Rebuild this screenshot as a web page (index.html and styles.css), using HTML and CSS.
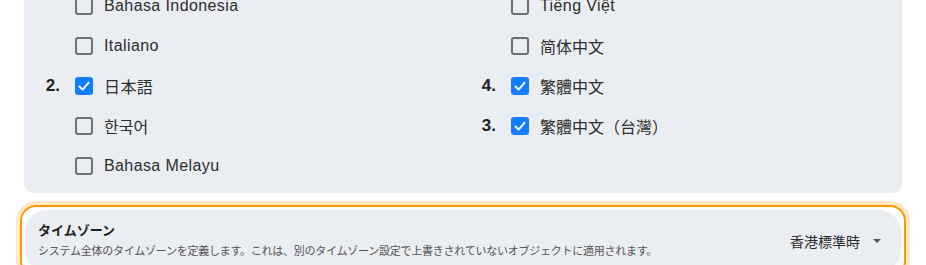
FILE: index.html
```html
<!DOCTYPE html>
<html lang="ja">
<head>
    <meta charset="UTF-8">
    <meta name="viewport" content="width=device-width, initial-scale=1.0">
    <title>言語とタイムゾーン</title>
    <link rel="stylesheet" href="styles.css">
</head>
<body>
    <div class="page">
        <div class="lang-panel">
            <div class="lang-col">
                <label class="lang-item">
                    <span class="order"></span>
                    <span class="box"></span>
                    <span class="name" lang="id">Bahasa Indonesia</span>
                </label>
                <label class="lang-item">
                    <span class="order"></span>
                    <span class="box"></span>
                    <span class="name" lang="it">Italiano</span>
                </label>
                <label class="lang-item">
                    <span class="order">2.</span>
                    <span class="box checked">
                        <svg viewBox="0 0 18 18" width="18" height="18"><polyline points="4.5,9.5 7.6,12.6 13.6,5.6"/></svg>
                    </span>
                    <span class="name">日本語</span>
                </label>
                <label class="lang-item">
                    <span class="order"></span>
                    <span class="box"></span>
                    <span class="name" lang="ko">한국어</span>
                </label>
                <label class="lang-item">
                    <span class="order"></span>
                    <span class="box"></span>
                    <span class="name" lang="ms">Bahasa Melayu</span>
                </label>
            </div>
            <div class="lang-col">
                <label class="lang-item">
                    <span class="order"></span>
                    <span class="box"></span>
                    <span class="name" lang="vi">Tiếng Việt</span>
                </label>
                <label class="lang-item">
                    <span class="order"></span>
                    <span class="box"></span>
                    <span class="name" lang="zh-CN">简体中文</span>
                </label>
                <label class="lang-item">
                    <span class="order">4.</span>
                    <span class="box checked">
                        <svg viewBox="0 0 18 18" width="18" height="18"><polyline points="4.5,9.5 7.6,12.6 13.6,5.6"/></svg>
                    </span>
                    <span class="name" lang="zh-TW">繁體中文</span>
                </label>
                <label class="lang-item">
                    <span class="order">3.</span>
                    <span class="box checked">
                        <svg viewBox="0 0 18 18" width="18" height="18"><polyline points="4.5,9.5 7.6,12.6 13.6,5.6"/></svg>
                    </span>
                    <span class="name" lang="zh-TW">繁體中文（台灣）</span>
                </label>
            </div>
        </div>

        <div class="setting-focus">
            <div class="setting">
                <div class="setting-text">
                    <div class="setting-title">タイムゾーン</div>
                    <div class="setting-desc">システム全体のタイムゾーンを定義します。これは、別のタイムゾーン設定で上書きされていないオブジェクトに適用されます。</div>
                </div>
                <div class="select">
                    <span>香港標準時</span>
                    <span class="caret"></span>
                </div>
            </div>
        </div>
    </div>
</body>
</html>
```

FILE: styles.css
```css
* {
    margin: 0;
    padding: 0;
    box-sizing: border-box;
}

body {
    background: #ffffff;
    font-family: "Liberation Sans", "Noto Sans CJK JP", sans-serif;
    color: #2b2b2b;
    overflow: hidden;
}

.page {
    padding: 0 24px;
}

.lang-panel {
    background: #eaedf1;
    border-radius: 0 0 9px 9px;
    margin-top: -14px;
    padding: 0 15px 7px;
    display: grid;
    grid-template-columns: 1fr 1fr;
    column-gap: 24px;
}

.lang-col {
    display: flex;
    flex-direction: column;
}

.lang-item {
    display: flex;
    align-items: center;
    height: 40px;
}

.order {
    width: 36px;
    padding-right: 15px;
    text-align: right;
    font-size: 17px;
    font-weight: 700;
    color: #222;
}

.box {
    width: 18px;
    height: 18px;
    border: 2px solid #6f6f6f;
    border-radius: 3px;
    flex-shrink: 0;
    display: flex;
}

.box.checked {
    border: none;
    background: #0f7fff;
}

.box svg polyline {
    fill: none;
    stroke: #ffffff;
    stroke-width: 1.9;
    stroke-linecap: round;
    stroke-linejoin: round;
}

.name {
    margin-left: 11px;
    font-size: 16px;
    letter-spacing: 0.4px;
    color: #2e2e2e;
}

.name:lang(zh-CN) {
    font-family: "Liberation Sans", "Noto Sans CJK SC", sans-serif;
    letter-spacing: 0;
}

.name:lang(zh-TW) {
    font-family: "Liberation Sans", "Noto Sans CJK TC", sans-serif;
    letter-spacing: 0;
}

.name:lang(ko) {
    font-family: "Liberation Sans", "Noto Sans CJK KR", sans-serif;
    letter-spacing: 0;
}

.setting-focus {
    margin: 12px -4px 0;
    border: 2px solid #ff9500;
    border-radius: 16px;
    box-shadow: 0 0 0 4px #ffe8c6;
    padding: 3px;
}

.setting {
    background: #eaedf1;
    border-radius: 22px;
    display: flex;
    align-items: center;
    justify-content: space-between;
    padding: 10px 20px 11px 13px;
    min-height: 62px;
}

.setting-title {
    font-size: 13px;
    font-weight: 700;
    color: #1e1e1e;
    line-height: 18px;
}

.setting-desc {
    font-size: 11px;
    letter-spacing: -0.25px;
    color: #555;
    line-height: 18px;
    margin-top: 2px;
}

.select {
    display: flex;
    align-items: center;
    gap: 13px;
    font-size: 14px;
    color: #2b2b2b;
}

.caret {
    width: 0;
    height: 0;
    border-left: 4px solid transparent;
    border-right: 4px solid transparent;
    border-top: 4px solid #555;
    margin-top: 1px;
}
```
